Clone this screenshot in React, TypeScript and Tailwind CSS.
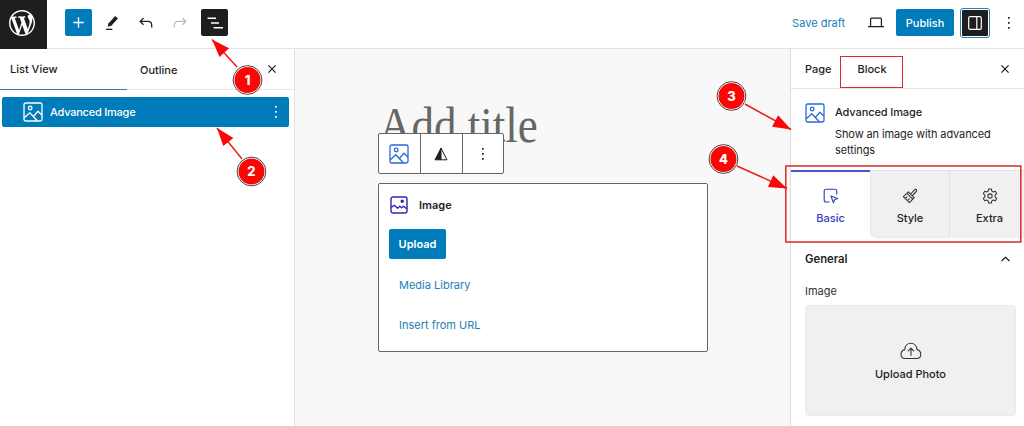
const annotations = [
  { label: '1', x: 247.5, y: 80, fromX: 237, fromY: 67, angle: 227, tipX: 212, tipY: 39.5 },
  { label: '2', x: 251.5, y: 171.5, fromX: 242, fromY: 159, angle: 231, tipX: 217, tipY: 128 },
  { label: '3', x: 731.5, y: 96, fromX: 745, fromY: 104, angle: 28, tipX: 791, tipY: 129.5 },
  { label: '4', x: 723.5, y: 159, fromX: 737, fromY: 166, angle: 24, tipX: 787, tipY: 188.5 },
];

function WordPressLogo() {
  return (
    <svg width="26" height="26" viewBox="0 0 20 20" fill="white">
      <path d="M20 10c0-5.51-4.49-10-10-10C4.48 0 0 4.49 0 10c0 5.52 4.48 10 10 10 5.51 0 10-4.48 10-10zM7.78 15.37L4.37 6.22c.55-.02 1.17-.08 1.17-.08.5-.06.44-1.13-.06-1.11 0 0-1.45.11-2.37.11-.18 0-.37 0-.58-.01C4.12 2.69 6.87 1.11 10 1.11c2.33 0 4.45.87 6.05 2.34-.68-.11-1.65.39-1.65 1.58 0 .74.45 1.36.9 2.1.35.61.55 1.36.55 2.46 0 1.49-1.4 5-1.4 5l-3.03-8.37c.54-.02.82-.17.82-.17.5-.05.44-1.25-.06-1.22 0 0-1.44.12-2.38.12-.87 0-2.33-.12-2.33-.12-.5-.03-.56 1.2-.06 1.22l.92.08 1.26 3.41zM17.41 10c.24-.64.74-1.87.43-4.25.7 1.29 1.05 2.71 1.05 4.25 0 3.29-1.73 6.24-4.4 7.78.97-2.59 1.94-5.2 2.92-7.78zM6.1 18.09C3.12 16.65 1.11 13.53 1.11 10c0-1.3.23-2.48.72-3.59C3.25 10.3 4.67 14.2 6.1 18.09zm4.03-6.63l2.58 6.98c-.86.29-1.76.45-2.71.45-.79 0-1.57-.11-2.29-.33.81-2.38 1.62-4.74 2.42-7.1z" />
    </svg>
  );
}

function PhotoIcon({ className }: { className?: string }) {
  return (
    <svg className={className} width="20" height="20" viewBox="0 0 20 20" fill="none" stroke="currentColor" strokeWidth="1.3" strokeLinejoin="round">
      <rect x="1" y="1" width="18" height="18" rx="1.8" />
      <circle cx="7.2" cy="6" r="1.8" />
      <path d="M1 16l5.8-5.2 7.5 7.9M10.3 14.5l4.7-5.2 4 4" />
    </svg>
  );
}

function DotsIcon({ className }: { className?: string }) {
  return (
    <svg className={className} width="4" height="14" viewBox="0 0 4 14" fill="currentColor">
      <rect x="1" y="1" width="1.7" height="1.7" />
      <rect x="1" y="6" width="1.7" height="1.7" />
      <rect x="1" y="11" width="1.7" height="1.7" />
    </svg>
  );
}

function CloseIcon() {
  return (
    <svg width="8" height="8" viewBox="0 0 8 8" stroke="currentColor" strokeWidth="1.2">
      <path d="M.4.4l7.2 7.2M7.6.4L.4 7.6" />
    </svg>
  );
}

function TopBar() {
  return (
    <header className="flex h-[49px] shrink-0 items-center border-b border-[#e4e4e4] bg-white">
      <div className="flex h-[49px] w-[47px] items-center justify-center bg-[#1e1e1e] pr-[3px] pb-[2px]">
        <WordPressLogo />
      </div>
      <div className="mb-[3px] ml-[18px] flex h-[27px] w-[27px] items-center justify-center rounded-[2px] bg-[#007cba]">
        <svg width="11" height="11" viewBox="0 0 11 11" stroke="white" strokeWidth="1.3">
          <path d="M5.5.3v10.4M.3 5.5h10.4" />
        </svg>
      </div>
      <svg className="mb-[3px] ml-[13px]" width="14" height="16" viewBox="0 0 14 16" fill="#1e1e1e">
        <path d="M10.2 1.1l2.7 2.3-6.6 7.3-3.6 1.1.7-3.2z" />
        <path d="M1 13.7h6.3V15H1z" />
      </svg>
      <svg className="mt-px mb-[3px] ml-[20px]" width="14" height="12" viewBox="0 0 14 12" fill="none" stroke="#1e1e1e" strokeWidth="1.3">
        <path d="M4.5 1L1.2 4.4l3.3 3.4M1.2 4.4h7.5c2.6 0 4 1.2 4 3.8v2.3" />
      </svg>
      <svg className="mt-px mb-[3px] ml-[20px]" width="14" height="12" viewBox="0 0 14 12" fill="none" stroke="#bdbdbd" strokeWidth="1.3">
        <path d="M9.5 1l3.3 3.4-3.3 3.4M12.8 4.4H5.3c-2.6 0-4 1.2-4 3.8v2.3" />
      </svg>
      <div className="mb-[3px] ml-[14px] flex h-[27px] w-[27px] items-center justify-center rounded-[2px] bg-[#1e1e1e]">
        <svg width="16" height="12" viewBox="0 0 16 12" stroke="white" strokeWidth="1.5">
          <path d="M.5 1.2H9M4 6h8M6.6 10.8H16" />
        </svg>
      </div>
      <div className="mb-[3px] ml-auto flex items-center text-[11px]">
        <span className="pt-px text-[#1680ba]">Save draft</span>
        <svg className="ml-[23px]" width="16" height="11" viewBox="0 0 16 11" fill="none" stroke="#1e1e1e" strokeWidth="1.2">
          <path d="M2.6 9.5V2.3c0-.7.4-1.1 1.1-1.1h8.6c.7 0 1.1.4 1.1 1.1v7.2M0 9.7h16" />
        </svg>
        <button className="ml-[12px] h-[27px] w-[58px] rounded-[2px] bg-[#007cba] pt-px font-medium text-white">Publish</button>
        <div className="ml-[6px] flex h-[30px] w-[30px] items-center justify-center rounded-[3px] border border-[#2880b5] bg-white p-px">
          <div className="flex h-full w-full items-center justify-center rounded-[1px] bg-[#1e1e1e]">
            <svg width="14" height="14" viewBox="0 0 14 14" fill="none" stroke="white" strokeWidth="1.2">
              <rect x=".7" y=".7" width="12.6" height="12.6" rx="1.4" />
              <path d="M8.8.7v12.6" />
            </svg>
          </div>
        </div>
        <DotsIcon className="mr-[13px] ml-[17px]" />
      </div>
    </header>
  );
}

function ListView() {
  return (
    <aside className="w-[295px] shrink-0 border-r border-[#e2e2e2] bg-white">
      <div className="flex h-[41px] items-center border-b border-[#e6e6e6] text-[11px] font-medium">
        <div className="flex h-[41px] w-[127px] items-center border-b border-b-[#2b7fc2] pt-[2px] pl-[10px]">List View</div>
        <span className="ml-[13px] pt-[2px]">Outline</span>
        <div className="mr-[18px] ml-auto">
          <CloseIcon />
        </div>
      </div>
      <div className="mt-[7px] ml-[2px] flex h-[30px] w-[287px] items-center rounded-[2px] bg-[#007cba] pl-[21px] text-[11px] font-medium text-white">
        <PhotoIcon />
        <span className="ml-[7px] pt-px tracking-[-0.02em]">Advanced Image</span>
        <DotsIcon className="mr-[11px] ml-auto" />
      </div>
    </aside>
  );
}

function Canvas() {
  return (
    <main className="flex min-w-0 flex-1 flex-col bg-[#f8f8f8] pl-[83px]">
      <h1 className="mt-[51px] ml-px h-[33px] w-max origin-left scale-x-[0.9] font-['Liberation_Serif',serif] text-[50px] leading-[50px] text-[#666]">
        Add title
      </h1>
      <div className="relative flex h-[41px] w-[126px] rounded-[2px] border border-[#666] bg-white">
        <div className="flex w-[42px] items-center justify-center border-r border-[#666] pr-px text-[#2765d8]">
          <PhotoIcon />
        </div>
        <div className="flex w-[42px] items-center justify-center border-r border-[#666] pr-[2px]">
          <svg width="14" height="14" viewBox="0 0 14 14" stroke="#1e1e1e" strokeLinejoin="round">
            <path d="M7 1.2v11.6H1z" fill="#1e1e1e" />
            <path d="M7 1.2l6 11.6H7z" fill="white" />
          </svg>
        </div>
        <div className="flex flex-1 items-center justify-center pr-px">
          <DotsIcon />
        </div>
      </div>
      <section className="mt-[9px] h-[169px] w-[330px] rounded-[2px] border border-[#666] bg-white pt-[12px] pl-[10px] text-[11px]">
        <div className="flex h-[18px] items-center">
          <svg className="ml-px" width="18" height="18" viewBox="0 0 18 18" fill="none" stroke="#3025bb" strokeWidth="1.4" strokeLinejoin="round">
            <rect x="1" y="1" width="16" height="16" rx="2" />
            <circle cx="12.2" cy="5.3" r="1" fill="#3025bb" />
            <path d="M1 11.5l3.3-2.2 3.3 3 2.2-2 1.8 1.4 2-1.5 3.4 2.8" />
          </svg>
          <span className="ml-[11px] font-semibold">Image</span>
        </div>
        <button className="mt-[15px] h-[30px] w-[57px] rounded-[2px] bg-[#007cba] font-semibold text-white">Upload</button>
        <div className="mt-[17px] ml-[10px] leading-[18px] text-[#2380b1]">Media Library</div>
        <div className="mt-[22px] ml-[10px] leading-[18px] text-[#2380b1]">Insert from URL</div>
      </section>
    </main>
  );
}

function BlockTabs() {
  return (
    <div className="mt-[12px] flex h-[68px] text-[11px] font-medium">
      <div className="flex w-[79px] flex-col items-center border-t-2 border-[#4a50d2] pt-[16px] text-[#343dbd]">
        <svg width="16" height="16" viewBox="0 0 16 16" fill="none" stroke="currentColor" strokeWidth="1.1" strokeLinejoin="round">
          <path d="M6.5 14H3.2c-1.3 0-2-.7-2-2V3.2c0-1.3.7-2 2-2h8.6c1.3 0 2 .7 2 2v3.3" />
          <path d="M8 8l6.6 2.6-3 1.2-1.2 3z" />
        </svg>
        <span className="mt-[6px]">Basic</span>
      </div>
      <div className="flex w-[80px] flex-col items-center rounded-bl-[7px] border border-t-[#e3e3e3] border-r-[#e0e0e0] border-b-[#e8e8e8] border-l-[#e5e5e5] bg-[#f0f0f0] pt-[17px]">
        <svg width="16" height="16" viewBox="0 0 16 16" fill="none" stroke="#33333b" strokeWidth="1.1" strokeLinejoin="round">
          <path d="M6.4 3.8l5.8 5.8-1.5 1.5-5.8-5.8zM8.7 6l3.8-4.2c1.2-1.3 3 .4 1.8 1.7L10.3 7.6" />
          <path d="M4.9 5.3L1.3 8.6l6.2 6.1 3.2-3.6M3.1 10.4l2.3-1.6M5.4 12.6L7.7 10.6" />
        </svg>
        <span className="mt-[6px]">Style</span>
      </div>
      <div className="flex flex-1 flex-col items-center border-t border-[#e3e3e3] bg-[#f0f0f0] pt-[17px] pl-[5px]">
        <svg width="16" height="16" viewBox="0 0 24 24" fill="none" stroke="#33333b" strokeWidth="1.6" strokeLinejoin="round">
          <path d="M10 1.5h4l.8 3.2 2 1.2 3.2-1 2 3.5-2.4 2.3v2.6l2.4 2.3-2 3.5-3.2-1-2 1.2-.8 3.2h-4l-.8-3.2-2-1.2-3.2 1-2-3.5 2.4-2.3v-2.6L2 8.4l2-3.5 3.2 1 2-1.2z" />
          <circle cx="12" cy="12" r="3.2" />
        </svg>
        <span className="mt-[6px]">Extra</span>
      </div>
    </div>
  );
}

function Inspector() {
  return (
    <aside className="w-[234px] shrink-0 border-l border-[#dedede] bg-white text-[11px]">
      <div className="flex h-[40px] items-center border-b border-[#e4e4e4] pl-[14px] font-medium">
        <span className="w-[35px] pt-[2px]">Page</span>
        <div className="mt-[7px] flex h-[32px] w-[63px] justify-center border border-[#df2828] pt-[4px] pl-px">Block</div>
        <div className="mr-[15px] ml-auto">
          <CloseIcon />
        </div>
      </div>
      <div className="flex h-[69px] pt-[14px] pl-[14px]">
        <PhotoIcon className="shrink-0 text-[#2867dd]" />
        <div className="ml-[10px] w-[170px]">
          <div className="leading-[18px] font-medium tracking-[-0.01em]">Advanced Image</div>
          <p className="mt-[5px] leading-[16px] tracking-[-0.01em]">Show an image with advanced settings</p>
        </div>
      </div>
      <BlockTabs />
      <div className="mt-[11px] flex h-[20px] items-center justify-between pr-[14px] pl-[14px] text-[11.3px] font-semibold">
        <span>General</span>
        <svg width="9" height="6" viewBox="0 0 9 6" fill="none" stroke="currentColor" strokeWidth="1.3">
          <path d="M.5 5l4-3.7 4 3.7" />
        </svg>
      </div>
      <div className="mt-[13px] ml-[14px] leading-[18px] text-[#333]">Image</div>
      <div className="mt-[5px] ml-[14px] flex h-[111px] w-[211px] flex-col items-center rounded-[4px] border border-[#ebebeb] bg-[#f0f0f0] pt-[36px] font-medium">
        <svg width="22" height="18" viewBox="0 0 22 18" fill="none" stroke="#333" strokeWidth="1.1" strokeLinecap="round" strokeLinejoin="round">
          <path d="M5 16.5C-.2 16.2-.4 9 4.8 7.6 5-.8 16.6-.8 17 7.6c5.2 1.4 5 8.6-.2 8.9zM11 13.3V6.2M8.3 8.9L11 6.2l2.7 2.7" />
        </svg>
        <span className="mt-[6px]">Upload Photo</span>
      </div>
    </aside>
  );
}

// Numbered callouts and their arrows, drawn above the editor.
function Annotations() {
  return (
    <svg className="pointer-events-none absolute inset-0" width="1024" height="426" viewBox="0 0 1024 426">
      <rect x="785.8" y="166" width="235" height="76" fill="none" stroke="#dc2828" strokeWidth="1.5" />
      {annotations.map((a) => (
        <g key={a.label}>
          <path d={`M${a.fromX} ${a.fromY}L${a.tipX} ${a.tipY}`} stroke="#ed1c1c" strokeWidth="1.5" />
          <path d="M0 0L-18 -6.5L-18 6.5Z" fill="#fa0808" transform={`translate(${a.tipX} ${a.tipY}) rotate(${a.angle})`} />
          <circle cx={a.x} cy={a.y} r="14.4" fill="white" stroke="#444" strokeWidth="1" />
          <circle cx={a.x} cy={a.y} r="13" fill="#fc0505" />
          <text x={a.x} y={a.y + 4.7} textAnchor="middle" fill="white" fontSize="13" fontWeight="800">
            {a.label}
          </text>
        </g>
      ))}
    </svg>
  );
}

export default function App() {
  return (
    <div className="relative flex h-[426px] w-[1024px] flex-col overflow-hidden bg-white font-[Inter,sans-serif] text-[#1e1e1e]">
      <TopBar />
      <div className="flex min-h-0 flex-1">
        <ListView />
        <Canvas />
        <Inspector />
      </div>
      <Annotations />
    </div>
  );
}
